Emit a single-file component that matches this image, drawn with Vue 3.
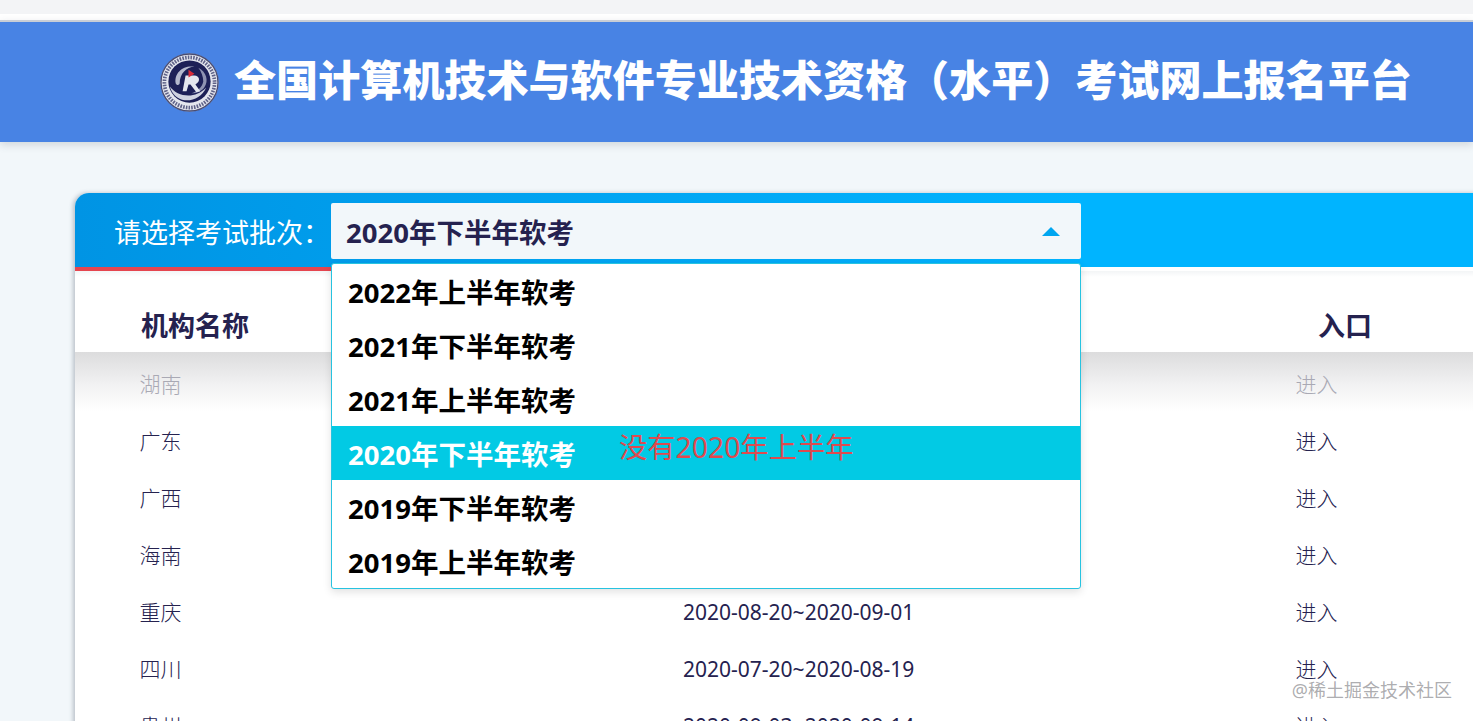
<script setup>
const options = ['2022年上半年软考', '2021年下半年软考', '2021年上半年软考', '2020年下半年软考', '2019年下半年软考', '2019年上半年软考']
const rows = [
  { name: '湖南', date: '', muted: true },
  { name: '广东', date: '' },
  { name: '广西', date: '' },
  { name: '海南', date: '' },
  { name: '重庆', date: '2020-08-20~2020-09-01' },
  { name: '四川', date: '2020-07-20~2020-08-19' },
  { name: '贵州', date: '2020-09-03~2020-09-14' },
]
</script>

<template>
  <div class="page">
    <div class="chrome"><div class="chrome-bar"></div></div>
    <header class="banner">
      <svg class="logo" viewBox="0 0 60 60" aria-hidden="true">
        <circle cx="30" cy="30" r="29.5" fill="#e4e6ee" />
        <circle cx="30" cy="30" r="29" fill="none" stroke="#4a4d72" stroke-width="1.4" />
        <circle cx="30" cy="30" r="25.5" fill="none" stroke="#5f6288" stroke-width="3.8" stroke-dasharray="1.6 1.2" />
        <circle cx="30" cy="29" r="21.5" fill="#1d2057" />
        <path d="M10 34c8 11 26 13 37 1-4 9-13 14-22 13-7-1-13-6-15-14z" fill="#d0d3e0" />
        <path d="M16 31c-2-11 8-19 19-17-8 0-15 7-15 17-1 2-3 2-4 0z" fill="#b4b8cd" />
        <path d="M39 15c8 4 11 13 6 20-3 4-8 6-13 6 6-2 11-6 12-12 0-5-2-10-5-14z" fill="#8f93b2" />
        <path d="M23 39l3-16h9c5 0 7 6 1 9l5 7-4 1-6-8-2 0-2 7z" fill="#e4e6ee" />
        <path d="M29 17l6 4-6 4z" fill="#d92c3a" />
      </svg>
      <h1 class="title">全国计算机技术与软件专业技术资格（水平）考试网上报名平台</h1>
    </header>

    <main class="card">
      <div class="card-top">
        <span class="label">请选择考试批次：</span>
        <div class="select">
          <span>2020年下半年软考</span>
          <i class="caret"></i>
        </div>
        <ul class="menu">
          <li v-for="o in options" :key="o" :class="{ active: o === '2020年下半年软考' }">{{ o }}</li>
          <span class="note">没有2020年上半年</span>
        </ul>
      </div>
      <div class="accent"></div>
      <div class="thead">
        <span class="c1">机构名称</span>
        <span class="c3">入口</span>
      </div>
      <div class="tbody">
        <div v-for="r in rows" :key="r.name" class="row" :class="{ muted: r.muted }">
          <span class="c1">{{ r.name }}</span>
          <span class="c2">{{ r.date }}</span>
          <span class="c3">进入</span>
        </div>
      </div>
    </main>
    <span class="watermark">@稀土掘金技术社区</span>
  </div>
</template>

<style>
html, body { margin: 0; height: 100%; overflow: hidden; }
</style>

<style scoped>
.page {
  position: relative;
  height: 721px;
  overflow: hidden;
  background: #f2f7fa;
  font-family: "Noto Sans", "Noto Sans CJK SC", sans-serif;
  color: #25224f;
}
.chrome { height: 20px; background: #fff; }
.chrome-bar { height: 14px; background: #f3f4f6; }
.banner {
  height: 122px;
  box-sizing: border-box;
  border-top: 2px solid #c9ced6;
  background: #4883e4;
  box-shadow: 0 3px 8px rgba(60, 70, 90, .18);
  display: flex;
  align-items: center;
  padding-left: 160px;
  gap: 15px;
  margin-bottom: 51px;
  position: relative;
}
.logo { width: 59px; height: 59px; flex: none; }
.title {
  margin: 0;
  padding-bottom: 8px;
  color: #fff;
  font-family: "Noto Sans CJK SC", sans-serif;
  font-size: 42.07px;
  font-weight: 900;
  line-height: 1;
  white-space: nowrap;
}
.card {
  margin-left: 75px;
  width: 1440px;
  background: #fff;
  border-radius: 14px 0 0 0;
  box-shadow: -2px 0 4px rgba(60, 70, 90, .3);
}
.card-top {
  position: relative;
  height: 74px;
  box-sizing: border-box;
  padding: 10px 0 0 39px;
  display: flex;
  background: linear-gradient(90deg, #0094e4 0%, #00b4ff 70%);
  border-radius: 14px 0 0 0;
}
.label { width: 217px; color: #fff; font-size: 27px; line-height: 60px; white-space: nowrap; }
.select {
  width: 750px;
  height: 56px;
  box-sizing: border-box;
  padding: 0 21px 0 15px;
  display: flex;
  align-items: center;
  justify-content: space-between;
  background: #f2f7fa;
  border-radius: 2px;
  font-size: 27.5px;
  font-weight: 700;
  color: #25224f;
}
.caret { width: 0; height: 0; border: 9px solid transparent; border-top: 0; border-bottom: 9px solid #00a6f0; }
.menu {
  position: absolute;
  z-index: 3;
  left: 256px;
  top: 70px;
  width: 750px;
  height: 326px;
  box-sizing: border-box;
  margin: 0;
  padding: 0;
  list-style: none;
  background: #fff;
  border: 1px solid #27c3e0;
  border-radius: 3px;
  box-shadow: 0 3px 8px rgba(0, 0, 0, .12);
}
.menu li {
  height: 54px;
  line-height: 58px;
  padding-left: 16px;
  font-size: 27.5px;
  font-weight: 700;
  color: #000;
}
.menu li.active { background: #02cae4; color: #fff; }
.note {
  position: absolute;
  left: 287px;
  top: 163px;
  font-size: 28.3px;
  line-height: 40px;
  color: #df4a4f;
  white-space: nowrap;
}
.accent { height: 4px; width: 256px; background: #e5454f; }
.thead {
  height: 81px;
  position: relative;
  font-size: 27px;
  font-weight: 700;
  color: #25224f;
  background: linear-gradient(180deg, #f3f5f6 0, #fff 6px);
}
.thead .c1 { position: absolute; left: 66px; top: 35px; line-height: 40px; }
.thead .c3 { position: absolute; left: 1243px; top: 35px; line-height: 40px; }
.tbody {
  position: relative;
  background: linear-gradient(180deg, #dcdcdd 0, #f1f1f2 32px, #fff 60px);
  padding-top: 3px;
  font-size: 21px;
}
.row { height: 57px; display: flex; align-items: center; line-height: 28px; }
.row .c1 { width: 608px; padding-left: 64.5px; box-sizing: border-box; font-weight: 300; }
.row .c2 { width: 612.5px; }
.row .c3 { width: 100px; font-weight: 300; }
.row.muted { color: #a9a9b4; }
.watermark {
  position: absolute;
  right: 21px;
  top: 677px;
  font-size: 18px;
  line-height: 26px;
  color: rgba(120, 120, 125, .62);
  text-shadow: 0 0 1px rgba(255, 255, 255, .7);
  white-space: nowrap;
}
</style>
